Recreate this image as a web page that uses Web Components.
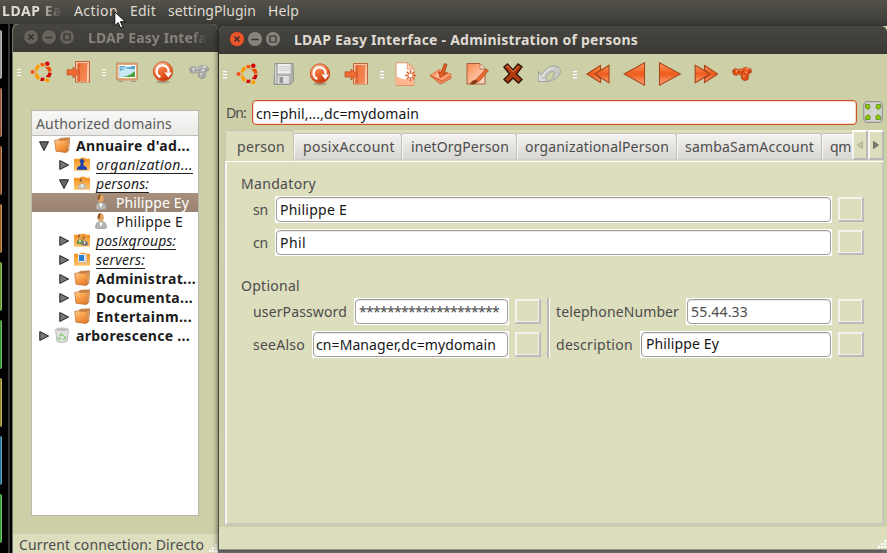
<!DOCTYPE html>
<html lang="en"><head><meta charset="utf-8"><title>LDAP Easy Interface</title>
<style>
html,body{margin:0;width:887px;height:553px;overflow:hidden;background:#000}
body{font:14px/19px "Noto Sans","Open Sans",sans-serif;color:#4c4c4c}
</style></head><body>
<ldap-desktop></ldap-desktop>
<script>
const define=(name,css,html,after)=>customElements.define(name,class extends HTMLElement{
  connectedCallback(){
    if(this.shadowRoot)return;
    const r=this.attachShadow({mode:'open'});
    r.innerHTML=`<style>*{box-sizing:border-box}${css}</style>`+(typeof html==='function'?html(this):html);
    if(after)after(this,r);
  }
});

/* Text label; "w" sets its advance width through letter spacing. */
define('fit-text',':host{display:block;flex:none;white-space:pre;line-height:19px}span{display:inline-block}','<span><slot></slot></span>',(el,r)=>{
  const w=+el.getAttribute('w');if(!w)return;
  el.style.width=w+'px';
  const s=r.querySelector('span'),n=el.textContent.length;
  s.style.letterSpacing=((w-s.getBoundingClientRect().width)/n)+'px';
});

const defs=`<defs>
<linearGradient id="o" x2=".4" y2="1"><stop stop-color="#ffd9bd"/><stop offset=".45" stop-color="#f47a42"/><stop offset="1" stop-color="#cf3c0c"/></linearGradient>
<linearGradient id="p" x2=".9" y2="1"><stop stop-color="#f98850"/><stop offset=".5" stop-color="#fdb48c"/><stop offset="1" stop-color="#ffd9c4"/></linearGradient>
<linearGradient id="a" x2="0" y2="1"><stop stop-color="#ff9a5c"/><stop offset=".5" stop-color="#ee5a1c"/><stop offset="1" stop-color="#ffa97c"/></linearGradient>
<linearGradient id="f" x2="0" y2="1"><stop stop-color="#f7931e"/><stop offset="1" stop-color="#ffc56c"/></linearGradient>
<linearGradient id="t" x2=".6" y2="1"><stop stop-color="#ffd08f"/><stop offset=".5" stop-color="#fba24e"/><stop offset="1" stop-color="#e8802c"/></linearGradient></defs>`;
const folder='<path d="M0 2.800h6l1-1h4l1 1h4v12H0z" fill="url(#f)"/><path d="M0 5h16" stroke="#e98c22" stroke-width=".8"/>';
const man=(c,s='')=>`<g ${s}><path d="M2.500 15c0-5 2-6 4-6.500h3c2 .5 4 1.500 4 6.500q-5 1.800-11 0z" fill="${c}" stroke="#888" stroke-width=".5"/><path d="M6.500 9l1 5 2-4z" fill="#fff"/><ellipse cx="7.800" cy="4.600" rx="3" ry="4" fill="#e0a564"/><path d="M4.700 6q-1-6 3.600-5.700-1.500 2-1.400 5z" fill="#96541f"/></g>`;
const bino=(c,d,l)=>`<g transform="translate(1.800 1.500)scale(.86)"><g fill="${c}" stroke="${d}" stroke-width=".5"><path d="M1 8l3-2.500 3 1.500 3-1 2 .5 3-2 7 1.500 1.500 4-3.500 2-1 6.500-3.500 1.500-4-2-.5-4-3-1.500-2.500 1.500-3.500-1z"/><path d="M1 8q2.500-1 2.500 2l-.5 2.500Q.5 11 1 8zM11.500 14q1-2 4-1l2.500 2-1 4-3 .5-2.500-2z"/></g><path d="M5 7.500l1 3M8.500 8l3-.8M13 14.500l2-.4M16 6.500l4-.3M15.500 9.500l2.500 1.500" stroke="${l}" stroke-width="1.200" fill="none"/><path d="M7 11l3-3M11 11l3-2M18.500 12l3-4" stroke="${d}" stroke-width="1.100"/></g>`;
const icons={
 ubuntu:['0 0 24 24','<g fill="none" stroke-width="3.400"><path d="M9.300 5.500A7.300 7.300 0 0 0 6 10.200" stroke="#ff9b00"/><path d="M6 13.800A7.300 7.300 0 0 0 9.300 18.500" stroke="#ff9b00"/><path d="M5.700 9.800v4.400" stroke="#ff9b00" stroke-width="2"/><path d="M10.600 4.900A7.300 7.300 0 0 1 14.800 5" stroke="#ff5500"/><path d="M15.900 5.900A7.300 7.300 0 0 1 20 11.400" stroke="#ee4a00"/><path d="M20 12.600A7.300 7.300 0 0 1 16.700 18" stroke="#d40000"/><path d="M14.800 19A7.300 7.300 0 0 1 10.600 19.100" stroke="#d40000"/></g><circle cx="3" cy="12" r="3" fill="#cdcfa7"/><circle cx="17.300" cy="4" r="3.100" fill="#cdcfa7"/><circle cx="17.300" cy="20" r="3.100" fill="#cdcfa7"/><circle cx="2.600" cy="12" r="2.100" fill="#f4511e"/><circle cx="17.300" cy="3.700" r="2.200" fill="#d40000"/><circle cx="17.300" cy="20.300" r="2.100" fill="#ff9b00"/>'],
 save:['0 0 24 24','<path d="M3 1.500H21l.5 17.500-3 3.500H2z" fill="#b0b0ae" stroke="#929292"/><path d="M6 2h12.500v9.500H5.800z" fill="#eee"/><path d="M7 4.500h11M7 6.500h11M7 8.500h11" stroke="#cfcfcf"/><path d="M6 14h11v7.500H5.500z" fill="#ddd"/><path d="M7.500 15h3.500v6H7.500z" fill="#929292"/><path d="M3.500 3v18" stroke="#d8d8d8"/>'],
 refresh:['0 0 24 24','<ellipse cx="12" cy="22" rx="7" ry="1.500" fill="#0003"/><circle cx="12" cy="11.500" r="9.700" fill="url(#o)" stroke="#c95b32" stroke-width="1"/><path d="M9.500 17A6 6 0 1 1 17.500 12.500" fill="none" stroke="#fff" stroke-width="2.400"/><path d="M13.500 12.500h7.500l-3.700 5z" fill="#fff"/>'],
 exit:['0 0 24 24','<path d="M9.500 1.500h14V22h-14z" fill="#fbc6a6" stroke="#bf6438"/><path d="M11.500 3.500h10v17.500h-10z" fill="#c63c0c"/><path d="M14 3.500l8 1v18l-8-1.500z" fill="url(#p)"/><path d="M12 2.500l9 2.500v17l-9-1.500z" fill="#ee7038" opacity=".75"/><path d="M1 9.800h6V7l6.500 5.500L7 18v-3H1z" fill="#ef6b34" stroke="#b6501f" stroke-width=".7"/>'],
 image:['0 0 24 24','<path d="M1.500 3h21v17h-21z" fill="#dda877" stroke="#c59468"/><path d="M4 5.500h16.500v12H4z" fill="#5aa6cb" stroke="#fff"/><path d="M4.500 11l7-2.500 8.500 1v4l-8 3-7.500 1z" fill="#c7e9f3"/><path d="M4.500 17q9 0 15.500-6v6z" fill="#47a53a"/><path d="M5.500 8h6M10 6.500h6" stroke="#e8f4fa"/><path d="M3 21.500h5M16 21.500h5" stroke="#999"/>'],
 graybino:['0 0 24 24',bino('#b4b4b2','#7c7c7a','#f0f0f0')],
 bino:['0 0 24 24',bino('#ea5417','#87300f','#ffab80')],
 doc:['0 0 24 24','<path d="M3 .8h11.500L21 6.500v17H3z" fill="#fff" stroke="#df9468"/><path d="M14.500 1l-.5 6 6.500.2z" fill="#ffd6bd" stroke="#e6844f" stroke-width=".7"/><path d="M3.500 14q7 5 17 3v6h-17z" fill="#ffb68f"/><path d="M17.500 8v11M12 13.500h11M13.800 9.700l7.500 7.500M13.800 17.200l7.500-7.500" stroke="#e05e26" stroke-width="1.500"/><circle cx="17.500" cy="13.500" r="2" fill="#fff"/>'],
 apply:['0 0 24 24','<path d="M1 13.500l9-6 13 5-9.500 7z" fill="#ff9c70" stroke="#d9713f" stroke-width=".8"/><path d="M1 13.500L11.500 22l11-6-1.500-2-8 5z" fill="#f0885a" stroke="#c65a2c" stroke-width=".8"/><path d="M6 14l6-4 4 2-5 4z" fill="#ffc5a6"/><path d="M15.500 1.500l2.500 1-3 9 3.500-.5-7.500 4.500-1.500-6 2.500 1.500z" fill="#e65a22" stroke="#a03c15" stroke-width=".8"/>'],
 edit:['0 0 24 24','<path d="M2 1.500h13l5 5V22H2z" fill="url(#p)" stroke="#a5613c"/><path d="M15 2v5h5" fill="#ffe6d7" stroke="#a5613c" stroke-width=".8"/><path d="M21 7l2.500 1.500L13.500 20l-3-2z" fill="#f06a2c" stroke="#9b4520" stroke-width=".7"/><path d="M5 22q2-4.500 6-4l2 1.500q-3 4-8 2.500z" fill="#8c3818"/>'],
 delete:['0 0 24 24','<path d="M3 5l3.500-3 5.500 6 5-6 4 3-5.500 7 5.500 5.500-3.500 3.500-5.500-5-5 5-4-3.500L8.500 12z" fill="#b03c0e" stroke="#321409" stroke-width="1.400"/><path d="M5 4.800l2-1 5 6 5.500-6" fill="none" stroke="#ef793d"/>'],
 undo:['0 0 24 24','<path d="M1.500 9.500L4 13Q10 4.500 17 4q7 .5 6.500 6-2 7-10.500 9 4-4 4.500-8-1-3-4-1-3 2-5 6l3.500 3.500H1.500z" fill="#c9c9c6" stroke="#a0a09b" stroke-width=".9"/><path d="M2.800 12.500V18H8M5 14.500Q10 6.500 16.500 5.500" fill="none" stroke="#eee" stroke-width="1.200"/>'],
 rewind:['0 0 24 24','<path d="M.8 12L14 3v5l9-5v18l-9-5v5z" fill="url(#a)"/><path d="M14.500 3.500L1 12l13.500 8.500v-4L9 12l5.500-4zM9 12l14-8.800v17.600z" fill="none" stroke="#a7481c" stroke-width="1.100"/>'],
 prev:['0 0 24 24','<path d="M2.200 12L22.500.8v22.400z" fill="url(#a)" stroke="#a7481c" stroke-width="1.100"/>'],
 next:['0 0 24 24','<path d="M22.300 12L1.500.8v22.400z" fill="url(#a)" stroke="#a7481c" stroke-width="1.100"/>'],
 forward:['0 0 24 24','<path d="M24 12L10.500 3v5L1 3v18l9.500-5v5z" fill="url(#a)"/><path d="M10.500 3.500L23.800 12l-13.300 8.500v-4L16 12l-5.500-4zM16 12L1.200 3.200v17.600z" fill="none" stroke="#a7481c" stroke-width="1.100"/>'],
 folder:['0 0 16 16','<path d="M5 2.200l2-1 8.500-.4.2 1.400-1 11.300-2 1.500z" fill="#d08844" stroke="#a8683a" stroke-width=".6"/><path d="M.7 3.400l4-.7 1 .6 7.700-.2-.4 11.800-1.300.6-9.700-1.300z" fill="url(#t)" stroke="#b76b35" stroke-width=".7"/><path d="M14 2.500v10" stroke="#ffd9a8" stroke-width=".6"/>'],
 org:['0 0 16 16',folder+'<path d="M3 13.500q0-3 3.500-3.500L7 7.500 6 5.500Q6 3 8 3t2 2.500L9 7.500l.5 2.500q3.500.5 3.500 3.500z" fill="#1d45b8" stroke="#102c78" stroke-width=".5"/>'],
 persons:['0 0 16 16',folder+man('#ccc','transform="translate(2.700 3)scale(.68)"')],
 groups:['0 0 16 16',folder+man('#6d943f','transform="translate(1 2)scale(.64)"')+man('#777','transform="translate(6 4)scale(.6)"')],
 server:['0 0 16 16',folder+'<path d="M4.500 3.500h6v7h-6z" fill="#277fce" stroke="#eee"/><path d="M11 3h1.500v9H11zM5 12h6" fill="#eee" stroke="#bbb" stroke-width=".6"/>'],
 person:['0 0 16 16',man('#b5b5b2')],
 trash:['0 0 16 16','<path d="M1.500 2.500h13l-1.500 12q-5 2-10 0z" fill="#e2e2e0" stroke="#aaa" stroke-width=".8"/><ellipse cx="8" cy="2.500" rx="6.600" ry="1.700" fill="#b8b8b6" stroke="#ddd"/><path d="M5.500 9l2-2 2 2M11 9l.3 2.500-2.500 1M7 12.500l-2.500-1 .5-1.500" fill="none" stroke="#7cc963" stroke-width="1.300"/>'],
 down:['0 0 10 10','<path d="M.5.8h9L5 9.600z" fill="#666" stroke="#222"/>'],
 right:['0 0 10 10','<path d="M.8.5v9L9.600 5z" fill="#777" stroke="#222"/>'],
 left:['0 0 6 8','<path d="M5.600.3v7.400L.5 4z" fill="#c3c3a7" stroke="#9f9f8d" stroke-width=".6"/>'],
 tabright:['0 0 6 8','<path d="M.4.3v7.400L5.500 4z" fill="#777" stroke="#4a4a3c" stroke-width=".6"/>'],
 close:['0 0 16 16','<circle cx="8" cy="8" r="7.500" fill="var(--c,#65635c)" stroke="#302f2a" stroke-width=".6"/><path d="M5.500 5.500l5 5M10.500 5.500l-5 5" stroke="#302d28" stroke-width="1.400"/>'],
 min:['0 0 16 16','<circle cx="8" cy="8" r="7.500" fill="var(--c,#65635c)" stroke="#302f2a" stroke-width=".6"/><path d="M4.500 8.500h7" stroke="#33312d" stroke-width="1.400"/>'],
 max:['0 0 16 16','<circle cx="8" cy="8" r="7.500" fill="var(--c,#65635c)" stroke="#302f2a" stroke-width=".6"/><path d="M5 5h6v6H5z" fill="none" stroke="#33312d" stroke-width="1.200"/>'],
 cursor:['0 0 12 18','<path d="M.8.8v14l3.400-3.200 2.300 5.300 2.300-1-2.300-5.200h4.800z" fill="#fff" stroke="#111"/>'],
 expand:['0 0 20 22','<rect x=".7" y=".7" width="18.600" height="20.600" rx="4" fill="#d3d3ce" stroke="#949492" stroke-width="1.200"/><g fill="#8cc800" stroke="#55851b" stroke-width=".7"><path d="M2.500 3.500h4l.5 3.500-2 1.500-2.500-1.500zM17.500 3.500h-4L13 7l2 1.500L17.500 7zM2.500 18.500h4.500V15l-2-1.500-2.500 2zM17.500 18.500H13V15l2-1.500 2.500 2z"/></g>'],
 grip:['0 0 9 9','<path d="M6 0h2v2H6zM3 3h2v2H3zM6 3h2v2H6zM0 6h2v2H0zM3 6h2v2H3zM6 6h2v2H6z" fill="#fff"/>']
};
define('ui-icon',':host{display:block;flex:none;width:24px;height:24px}svg{display:block;width:100%;height:100%}',e=>{const [v,p]=icons[e.getAttribute('name')];return `<svg viewBox="${v}">${defs}${p}</svg>`});
define('tool-handle',':host{display:block;flex:none;width:4px;height:8px;margin:2px -3px 0 0;background:repeating-linear-gradient(#fff 0 1px,#dcdcd4 1px 1.500px,transparent 1.500px 3px)}','');
define('tool-bar',':host{display:flex;align-items:center;gap:12px;height:40px;padding-left:4px;overflow:hidden}',e=>e.getAttribute('items').split(' ').map(n=>n==='|'?'<tool-handle></tool-handle>':`<ui-icon name="${n}"></ui-icon>`).join(''));
define('menu-bar',':host{display:flex;align-items:center;height:24px;background:linear-gradient(#54524a,#3b3a36);color:#dfdbd2;padding:0 0 3px 2px}.app{font-weight:bold;width:60px;margin-right:12px;overflow:hidden;-webkit-mask:linear-gradient(90deg,#000 60%,transparent);mask:linear-gradient(90deg,#000 60%,transparent)}.m{display:flex;gap:12px}',
 `<div class="app"><fit-text w="60">LDAP Ea</fit-text></div><div class="m"><fit-text w="44">Action</fit-text><fit-text w="26">Edit</fit-text><fit-text w="88">settingPlugin</fit-text><fit-text w="31">Help</fit-text></div>`);
define('title-bar',':host{display:flex;align-items:center;height:28px;padding-left:10px;background:linear-gradient(#464540,#3b3a36);border-radius:6px 6px 0 0;font-weight:bold;color:#dfdbd2}ui-icon{width:16px;height:16px;margin:-1px 2px 0 0}:host([active]) ui-icon{--c:#85837a}:host([active]) ui-icon:first-of-type{--c:#ed562b}:host(:not([active])){color:#85837a;padding-bottom:1px}.t{margin-left:11px;overflow:hidden}:host(:not([active])) .t{width:119px;-webkit-mask:linear-gradient(90deg,#000 88%,transparent);mask:linear-gradient(90deg,#000 88%,transparent)}',
 '<ui-icon name="close"></ui-icon><ui-icon name="min"></ui-icon><ui-icon name="max"></ui-icon><div class="t"><slot></slot></div>');
define('tree-row',`:host{display:flex;align-items:center;height:19px;color:#1c1c1c;padding-left:7px}
:host([level="1"]){padding-left:27px}:host([level="2"]){padding-left:61px}
:host([sel]){background:linear-gradient(#a8907d,#998370);color:#fff}
.x{width:10px;height:10px;margin-right:5px}.i{width:16px;height:16px;margin:-1px 6px 0 0}:host([level="2"]) .i{margin-right:7px}
:host([bold]){font-weight:bold}:host([ital]) fit-text{font-style:italic;border-bottom:1px solid #222;height:19px;line-height:19px}`,
 e=>`${e.getAttribute('x')?`<ui-icon class="x" name="${e.getAttribute('x')}"></ui-icon>`:''}<ui-icon class="i" name="${e.getAttribute('icon')}"></ui-icon><fit-text w="${e.getAttribute('w')}">${e.textContent}</fit-text>`);
define('status-bar',':host{display:flex;background:#dcdebd;justify-content:space-between;align-items:flex-end}ui-icon{width:9px;height:9px}','<slot></slot><ui-icon name="grip"></ui-icon>');
define('entry-box',`:host{display:flex;align-items:center;flex:none;height:27px;background:#fff;border:1px solid #fff}
div{height:25px;flex:1;border:1px solid #9f9d98;border-radius:4px;background:#fff;padding:2px 0 0 3px;color:#161616;box-shadow:inset 0 1px #e8e8e4;font-size:14px}
:host([focus]){background:none;border:0;height:25px}:host([focus]) div{border:1px solid #cc5029;box-shadow:inset 0 0 0 1px #fbd7c7;padding:3px 0 0 3px}
:host([gray]) div{color:#4c4c4c}`,'<div><slot></slot></div>');
define('bevel-box',':host{display:block;flex:none;width:26px;height:25px;border:solid;border-width:1px 2px 2px 1px;border-color:#f2f2ef #bcbab9 #bcbab9 #f2f2ef;box-shadow:inset 1px 1px #f2f2ef,inset -1px -1px #efefec}','');
define('field-row',':host{display:flex;align-items:center;height:27px}fit-text{margin-right:7px;margin-top:-1px}entry-box{flex:1}entry-box fit-text{margin:0}bevel-box{margin-left:6px}',e=>{
 const g=n=>e.getAttribute(n);
 return `<fit-text w="${g('lw')}">${g('label')}</fit-text><entry-box ${g('gray')!==null?'gray':''}><fit-text w="${g('w')}" style="${g('vstyle')||''}">${g('value')}</fit-text></entry-box><bevel-box></bevel-box>`});
define('tab-item',':host{display:block;flex:none;height:27px;padding:3px 0 0 8px;border:1px solid #c0bfba;border-bottom-color:#cfcec8;border-left-color:#f7f7f5;border-radius:3px 3px 0 0;background:linear-gradient(#f4f3f1,#d8d6d2);box-shadow:inset 0 1px #fff}:host([on]){height:31px;padding:6px 0 0 11px;background:#dcdebd;border-color:#c3c3ba;border-bottom:0;box-shadow:none;border-radius:2px 2px 0 0}','<slot></slot>');
define('tab-strip',`:host{display:flex;align-items:flex-end;height:31px;background:#dcdebd;position:relative}
.tabs{display:flex;align-items:flex-end;width:627px;height:31px;overflow:hidden}tab-item:not([on]){margin-bottom:1px}
.b{width:16px;height:30px;align-self:flex-start;display:flex;align-items:center;justify-content:center;border:solid;border-width:2px;border-color:#fff #bbb9b8 #bbb9b8 #f5f5f1}.b ui-icon{width:6px;height:8px}`,
 `<div class="tabs"><tab-item on style="width:69px"><fit-text w="48">person</fit-text></tab-item><tab-item style="width:108px"><fit-text w="92">posixAccount</fit-text></tab-item><tab-item style="width:115px"><fit-text w="98">inetOrgPerson</fit-text></tab-item><tab-item style="width:160px"><fit-text w="144" style="margin-left:-1px">organizationalPerson</fit-text></tab-item><tab-item style="width:145px"><fit-text w="129" style="margin-left:-1px">sambaSamAccount</fit-text></tab-item><tab-item style="width:60px"><fit-text w="21" style="margin-left:-1px">qm</fit-text></tab-item></div><div class="b"><ui-icon name="left"></ui-icon></div><div class="b"><ui-icon name="tabright"></ui-icon></div>`);
define('person-page',`:host{display:flex;flex-direction:column;height:364px;border:solid;border-width:1px 2px 2px;border-color:#fff #c7c6c0 #c7c6c0 #f7f7ef;box-shadow:-1px 0 #c2c2b9;background:#dcdebd;padding:12px 18px 0 14px}
h4{margin:0;font:inherit;height:22px}.s{display:flex;flex-direction:column;gap:6px;padding-left:12px}.s field-row{height:27px}
.opt{margin-top:20px}.cols{display:flex;padding-left:12px}.c{display:flex;flex-direction:column;gap:6px}.l{width:288px}.r{width:308px}
.sep{width:3px;height:60px;margin:0 6px;background:linear-gradient(90deg,#bbb9b7 0 66%,#fff 66%)}`,
`<h4><fit-text w="75">Mandatory</fit-text></h4><div class="s"><field-row label="sn" lw="15" value="Philippe E" w="67"></field-row><field-row label="cn" lw="15" value="Phil" w="26"></field-row></div>
<h4 class="opt"><fit-text w="59">Optional</fit-text></h4><div class="cols"><div class="c l"><field-row label="userPassword" lw="94" value="********************" w="140" gray></field-row><field-row label="seeAlso" lw="52" value="cn=Manager,dc=mydomain" w="180" vstyle="margin-left:-1px"></field-row></div><div class="sep"></div><div class="c r"><field-row label="telephoneNumber" lw="123" value="55.44.33" w="57" gray></field-row><field-row label="description" lw="77" value="Philippe Ey" w="73" vstyle="margin:-1px 0 0 1px"></field-row></div></div>`);
define('tree-window',`:host{display:flex;flex-direction:column;width:206px;height:529px;background:#cdcfa7;border-left:1px solid #77766a;border-radius:6px 6px 0 0}
.tree{margin:18px 19px 0 18px;height:406px;border:1px solid #b9b7b3;background:#fff;overflow:hidden}
.h{height:25px;padding:3px 0 0 4px;background:linear-gradient(#f8f8f7,#eae9e7);border-bottom:1px solid #bfbeb9;color:#5a5a5a}status-bar{margin-top:auto;height:19px;padding-left:6px}`,
`<title-bar><fit-text w="119">LDAP Easy Intefa</fit-text></title-bar><tool-bar items="| ubuntu exit | image refresh graybino"></tool-bar>
<div class="tree"><div class="h"><fit-text w="136">Authorized domains</fit-text></div>
<tree-row bold x="down" icon="folder" w="114">Annuaire d'ad...</tree-row><tree-row ital level="1" x="right" icon="org" w="97">organization...</tree-row><tree-row ital level="1" x="down" icon="persons" w="53">persons:</tree-row><tree-row sel level="2" icon="person" w="73">Philippe Ey</tree-row><tree-row level="2" icon="person" w="67">Philippe E</tree-row><tree-row ital level="1" x="right" icon="groups" w="80">posixgroups:</tree-row><tree-row ital level="1" x="right" icon="server" w="49">servers:</tree-row><tree-row bold level="1" x="right" icon="folder" w="100">Administrat...</tree-row><tree-row bold level="1" x="right" icon="folder" w="97">Documenta...</tree-row><tree-row bold level="1" x="right" icon="folder" w="96">Entertainm...</tree-row><tree-row bold x="right" icon="trash" w="114">arborescence ...</tree-row></div>
<status-bar><fit-text w="185" style="margin-bottom:-1px">Current connection: Directo</fit-text></status-bar>`);
define('person-window',`:host{display:flex;flex-direction:column;width:668px;height:524px;background:#cdcfa7;border-bottom:1px solid #99998a;border-radius:6px 0 0 0;box-shadow:-2px 1px 5px #0007}
.dn{display:flex;align-items:center;height:27px;margin-top:6px;padding-left:7px}.dn entry-box{width:605px;margin:0 6px}.dn ui-icon{width:20px;height:22px;margin-top:-1px}
.nb{display:flex;flex-direction:column;width:659px;margin:4px 0 2px 6px}status-bar{height:22px;margin-top:auto}`,
`<title-bar active><fit-text w="344">LDAP Easy Interface - Administration of persons</fit-text></title-bar><tool-bar items="| ubuntu save refresh exit | doc apply edit delete undo | rewind prev next forward bino"></tool-bar>
<div class="dn"><fit-text w="20">Dn:</fit-text><entry-box focus><fit-text w="163">cn=phil,...,dc=mydomain</fit-text></entry-box><ui-icon name="expand"></ui-icon></div>
<div class="nb"><tab-strip></tab-strip><person-page></person-page></div><status-bar><span></span></status-bar>`);
define('launcher-strip',`:host{display:flex;flex-direction:column;gap:9px;width:10px;height:529px;padding-top:6px;background:#000;border-right:2px solid #343434;overflow:hidden}
i{display:block;flex:none;width:2px;height:49px;border-radius:0 4px 4px 0;background:var(--k);border-right:1px solid #fff5}`,
 ['#999','#985436','#955124','#a36122','#5d9a31','#379832','#9b8b2f','#2674a0','#389d34'].map(c=>`<i style="--k:${c}"></i>`).join(''));
define('ldap-desktop',`:host{display:block;position:relative;width:887px;height:553px;background:linear-gradient(#3b3a36 50px,#777 550px)}
menu-bar{position:relative}launcher-strip{position:absolute;left:0;top:24px}.gap{position:absolute;left:10px;top:24px;width:3px;height:529px;background:#000}tree-window{position:absolute;left:12px;top:24px}person-window{position:absolute;left:219px;top:26px}.cur{position:absolute;left:114px;top:11px;width:12px;height:18px}`,
 `<menu-bar></menu-bar><div class="gap"></div><launcher-strip></launcher-strip><tree-window></tree-window><person-window></person-window><ui-icon class="cur" name="cursor"></ui-icon>`);
</script></body></html>
